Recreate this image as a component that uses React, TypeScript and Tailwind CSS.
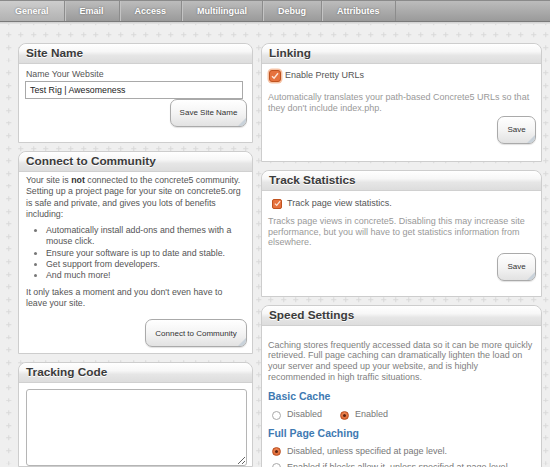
import React from "react";

const font = "font-['Liberation_Sans',Arial,sans-serif]";

function Panel({ title, bodyClass, children }: { title: string; bodyClass: string; children: React.ReactNode }) {
  return (
    <div className="shrink-0 border border-[#cdcdcd] rounded-t-[8px] bg-white overflow-hidden">
      <div className="h-[20px] border-b border-[#d0d0d0] rounded-t-[7px] bg-[linear-gradient(#ffffff_0%,#f7f7f7_40%,#e6e6e6_60%,#dddddd_100%)] pl-[7px] text-[11.8px] leading-[19px] font-bold text-[#3b3b3b] [text-shadow:0_1px_0_#ffffff]">
        {title}
      </div>
      <div className={bodyClass}>{children}</div>
    </div>
  );
}

function Btn({ label, w }: { label: string; w: string }) {
  return (
    <div
      className={`relative ${w} h-[28px] rounded-[7px] border border-[#aaaaaa] bg-[linear-gradient(#ffffff_0%,#f4f4f4_50%,#e2e2e2_100%)] shadow-[0_1px_1px_rgba(0,0,0,0.12)] overflow-hidden flex items-center justify-center text-[8px] text-[#333333]`}
    >
      {label}
      <span className="absolute right-0 bottom-0 w-0 h-0 border-l-[8px] border-l-transparent border-b-[8px] border-b-[#c9d2da]" />
    </div>
  );
}

function Check({ big }: { big?: boolean }) {
  return (
    <span
      className={
        big
          ? "w-[12px] h-[12px] rounded-[3px] bg-[#e6723e] border border-[#c0531f] shadow-[0_0_0_1.5px_#f6c3a6] flex items-center justify-center shrink-0"
          : "w-[10px] h-[10px] rounded-[2px] bg-[#e6723e] border border-[#c0531f] flex items-center justify-center shrink-0"
      }
    >
      <svg width={big ? 8 : 7} height={big ? 8 : 7} viewBox="0 0 8 8">
        <path d="M1 4.2 L3.1 6.2 L7 1.3" fill="none" stroke="#fce6d8" strokeWidth="1.4" />
      </svg>
    </span>
  );
}

function Radio({ on }: { on?: boolean }) {
  return on ? (
    <span className="w-[9px] h-[9px] rounded-full bg-[radial-gradient(circle_at_50%_35%,#f08a58,#d9602c)] border border-[#b94f20] flex items-center justify-center shrink-0">
      <span className="w-[3px] h-[3px] rounded-full bg-[#5e2410]" />
    </span>
  ) : (
    <span className="w-[9px] h-[9px] rounded-full border border-[#a9a9a9] bg-white shrink-0" />
  );
}

const tabs = ["General", "Email", "Access", "Multilingual", "Debug", "Attributes"];

export default function App() {
  return (
    <div className={`w-[550px] h-[467px] overflow-hidden bg-[#efefef] ${font}`}>
      {/* Tab bar */}
      <div className="h-[22px] border-t border-[#8a8a8a] border-b border-b-[#7a7a7a] bg-[linear-gradient(#bcbcbc,#9a9a9a)] flex">
        {tabs.map((t, i) => (
          <div
            key={t}
            className={
              i === 0
                ? "px-[15px] border-r border-[#8c8c8c] bg-[linear-gradient(#cdcdcd,#b2b2b2)] text-[9px] font-bold text-white leading-[20px] [text-shadow:0_0_2px_rgba(0,0,0,0.45)]"
                : "px-[15px] border-r border-[#8c8c8c] shadow-[inset_1px_0_0_#c4c4c4] text-[9px] font-bold text-white leading-[20px] [text-shadow:0_0_2px_rgba(0,0,0,0.45)]"
            }
          >
            {t}
          </div>
        ))}
      </div>
      <div className="h-[2px] bg-[linear-gradient(#cfcfcf,#e6e6e6)]" />

      {/* Main */}
      <div className="h-[443px] overflow-hidden bg-[#efefef] bg-[url('data:image/svg+xml,%3Csvg%20xmlns=%27http://www.w3.org/2000/svg%27%20width=%2712.5%27%20height=%2712.6%27%3E%3Cpath%20d=%27M6.5%204v5M4%206.5h5%27%20stroke=%27%23d9d9d9%27/%3E%3C/svg%3E')] bg-[position:2px_4.5px] flex items-start gap-[8px] pl-[18px] pt-[19px]">
        {/* Left column */}
        <div className="w-[235px] flex flex-col gap-[8px] shrink-0">
          <Panel title="Site Name" bodyClass="pt-[5px] pl-[6px] pr-[5px] pb-[15px] text-[8.8px]">
            <div className="leading-[11px] text-[#555555] pl-[1px]">Name Your Website</div>
            <div className="mt-[1px] h-[18px] w-[218px] border border-[#a9a9a9] flex items-center px-[4px] text-[#222222] leading-none">
              Test Rig | Awesomeness
            </div>
            <div className="flex justify-end">
              <Btn label="Save Site Name" w="w-[77px]" />
            </div>
          </Panel>

          <Panel title="Connect to Community" bodyClass="pt-[3px] pl-[7px] pr-[5px] pb-[6px] text-[8.8px] leading-[11.3px] text-[#555555]">
            <p className="whitespace-nowrap">
              Your site is <b className="text-[#333333]">not</b> connected to the concrete5 community.
              <br />
              Setting up a project page for your site on concrete5.org
              <br />
              is safe and private, and gives you lots of benefits
              <br />
              including:
            </p>
            <ul className="mt-[5px] pl-[20px] list-disc whitespace-nowrap marker:text-[#777777]">
              <li>
                Automatically install add-ons and themes with a
                <br />
                mouse click.
              </li>
              <li>Ensure your software is up to date and stable.</li>
              <li>Get support from developers.</li>
              <li>And much more!</li>
            </ul>
            <p className="mt-[5px] whitespace-nowrap">
              It only takes a moment and you don't even have to
              <br />
              leave your site.
            </p>
            <div className="mt-[10px] flex justify-end">
              <Btn label="Connect to Community" w="w-[102px]" />
            </div>
          </Panel>

          <Panel title="Tracking Code" bodyClass="pt-[6px] px-[7px]">
            <textarea
              readOnly
              className="block w-[221px] h-[77px] border border-[#b5b5b5] rounded-[3px] bg-white outline-none"
            />
          </Panel>
        </div>

        {/* Right column */}
        <div className="w-[281px] flex flex-col gap-[8px] shrink-0">
          <Panel title="Linking" bodyClass="pt-[6px] pl-[6px] pr-[5px] pb-[17px] text-[9px]">
            <div className="h-[12px] flex items-center gap-[4px] pl-[1px] text-[#555555]">
              <Check big />
              <span>Enable Pretty URLs</span>
            </div>
            <p className="mt-[9.5px] leading-[11px] text-[#999999]">
              Automatically translates your path-based Concrete5 URLs so that
              <br />
              they don't include index.php.
            </p>
            <div className="mt-[2.5px] flex justify-end">
              <Btn label="Save" w="w-[39px]" />
            </div>
          </Panel>

          <Panel title="Track Statistics" bodyClass="pt-[7px] pl-[6px] pr-[5px] pb-[15px] text-[9px]">
            <div className="h-[11px] flex items-center gap-[5px] pl-[4px] text-[#555555]">
              <Check />
              <span>Track page view statistics.</span>
            </div>
            <p className="mt-[7px] leading-[10.5px] text-[#999999] whitespace-nowrap">
              Tracks page views in concrete5. Disabling this may increase site
              <br />
              performance, but you will have to get statistics information from
              <br />
              elsewhere.
            </p>
            <div className="mt-[5.5px] flex justify-end">
              <Btn label="Save" w="w-[39px]" />
            </div>
          </Panel>

          <Panel title="Speed Settings" bodyClass="pt-[13.5px] pl-[6px] pr-[4px] pb-[10px] text-[9px]">
            <p className="leading-[10.8px] text-[#808080] whitespace-nowrap">
              Caching stores frequently accessed data so it can be more quickly
              <br />
              retrieved. Full page caching can dramatically lighten the load on
              <br />
              your server and speed up your website, and is highly
              <br />
              recommended in high traffic situations.
            </p>
            <div className="mt-[7.5px] text-[10.5px] leading-[13px] font-bold text-[#3f7ab2]">Basic Cache</div>
            <div className="mt-[6px] h-[12px] flex items-center pl-[4px] text-[#777777]">
              <Radio />
              <span className="ml-[6px]">Disabled</span>
              <span className="ml-[18px]">
                <Radio on />
              </span>
              <span className="ml-[6px]">Enabled</span>
            </div>
            <div className="mt-[5.5px] text-[10.5px] leading-[13px] font-bold text-[#3f7ab2]">Full Page Caching</div>
            <div className="mt-[6px] h-[12px] flex items-center pl-[4px] text-[#777777]">
              <Radio on />
              <span className="ml-[6px]">Disabled, unless specified at page level.</span>
            </div>
            <div className="mt-[4px] h-[12px] flex items-center pl-[4px] text-[#777777]">
              <Radio />
              <span className="ml-[6px]">Enabled if blocks allow it, unless specified at page level.</span>
            </div>
          </Panel>
        </div>
      </div>
    </div>
  );
}
